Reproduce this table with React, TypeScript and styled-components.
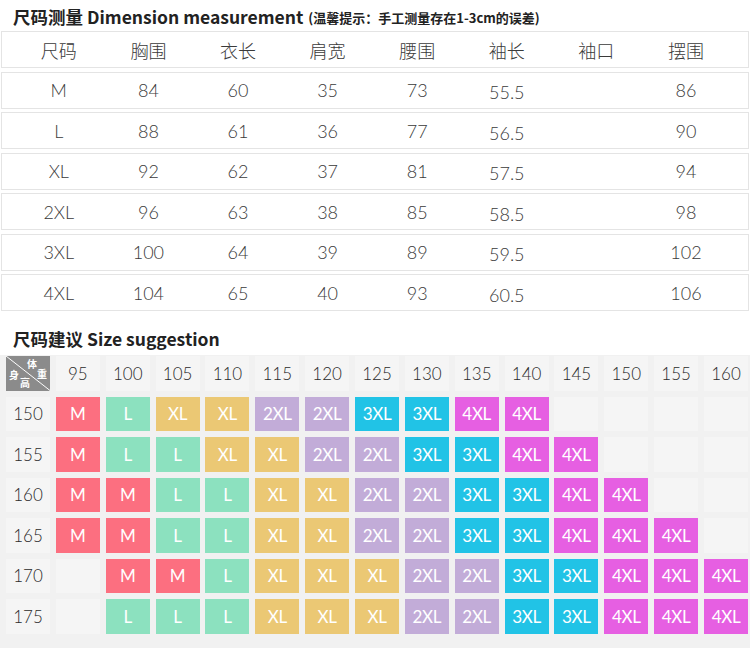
import React from "react";
import styled, { createGlobalStyle } from "styled-components";

const GlobalStyle = createGlobalStyle`
  html, body { margin: 0; padding: 0; background: #ffffff; }
  body { font-family: Lato, "Noto Sans CJK SC", sans-serif; color: #333; }
  * { box-sizing: border-box; }
`;

const Page = styled.div`
  width: 750px;
  background: #fff;
`;

const Title = styled.h2`
  margin: 0;
  height: 31px;
  padding: 1px 0 0 13px;
  display: flex;
  align-items: center;
  font-family: "Noto Sans CJK SC", sans-serif;
  font-weight: 700;
  font-size: 17.5px;
  color: #222;
  white-space: nowrap;
`;

const Note = styled.span`
  font-size: 13px;
  font-weight: 700;
  margin-left: 5px;
  margin-top: 2px;
  color: #222;
`;

const SizeTable = styled.div`
  display: flex;
  flex-direction: column;
  gap: 3.5px;
`;

const TableRow = styled.div`
  display: grid;
  grid-template-columns: repeat(8, 89.6px);
  padding-left: 12px;
  height: 37px;
  border: 1px solid #e4e4e4;
  margin: 0 1px;
  align-items: center;
  background: #fff;
`;

const TableCell = styled.div<{ $low?: boolean }>`
  text-align: center;
  font-size: 18px;
  font-weight: 300;
  color: #3a3a3a;
  font-family: Lato, "Noto Sans CJK SC", sans-serif;
  transform: translateY(${(p) => (p.$low ? "2px" : "0")});
`;

const SectionTitle = styled.h2`
  margin: 0;
  padding: 16px 0 4px 13px;
  line-height: 24px;
  font-family: "Noto Sans CJK SC", sans-serif;
  font-weight: 700;
  font-size: 17.5px;
  color: #222;
`;

const Chart = styled.div`
  background: #f1f1f1;
  padding: 1px 2px 14px 6px;
  display: grid;
  grid-template-columns: repeat(15, 1fr);
  grid-auto-rows: 34.5px;
  column-gap: 5.86px;
  row-gap: 6px;
`;

const Tile = styled.div`
  background: #f5f5f5;
  display: flex;
  align-items: center;
  justify-content: center;
  font-size: 17px;
  font-weight: 300;
  color: #2a2a2a;
`;

const COLORS: Record<string, string> = {
  M: "#fc6f80",
  L: "#8ce1bf",
  XL: "#ebc874",
  "2XL": "#c2acd8",
  "3XL": "#21c3e6",
  "4XL": "#e65fe2",
};

const SizeTile = styled.div<{ $bg: string }>`
  background: ${(p) => p.$bg};
  display: flex;
  align-items: center;
  justify-content: center;
  font-size: 17px;
  font-weight: 400;
  color: #fff;
  letter-spacing: -0.3px;
`;

const Corner = styled.div`
  position: relative;
  background: #8b8b8b;
  color: #fff;
  font-family: "Noto Sans CJK SC", sans-serif;
  font-size: 10px;
  font-weight: 700;
`;

const CornerLine = styled.svg`
  position: absolute;
  inset: 0;
  width: 100%;
  height: 100%;
`;

const CornerChar = styled.span<{ $x: number; $y: number }>`
  position: absolute;
  left: ${(p) => p.$x}px;
  top: ${(p) => p.$y}px;
  line-height: 12px;
`;

const headers = ["尺码", "胸围", "衣长", "肩宽", "腰围", "袖长", "袖口", "摆围"];
const rows = [
  ["M", "84", "60", "35", "73", "55.5", "", "86"],
  ["L", "88", "61", "36", "77", "56.5", "", "90"],
  ["XL", "92", "62", "37", "81", "57.5", "", "94"],
  ["2XL", "96", "63", "38", "85", "58.5", "", "98"],
  ["3XL", "100", "64", "39", "89", "59.5", "", "102"],
  ["4XL", "104", "65", "40", "93", "60.5", "", "106"],
];

const weights = ["95", "100", "105", "110", "115", "120", "125", "130", "135", "140", "145", "150", "155", "160"];
const chart: [string, string[]][] = [
  ["150", ["M", "L", "XL", "XL", "2XL", "2XL", "3XL", "3XL", "4XL", "4XL", "", "", "", ""]],
  ["155", ["M", "L", "L", "XL", "XL", "2XL", "2XL", "3XL", "3XL", "4XL", "4XL", "", "", ""]],
  ["160", ["M", "M", "L", "L", "XL", "XL", "2XL", "2XL", "3XL", "3XL", "4XL", "4XL", "", ""]],
  ["165", ["M", "M", "L", "L", "XL", "XL", "2XL", "2XL", "3XL", "3XL", "4XL", "4XL", "4XL", ""]],
  ["170", ["", "M", "M", "L", "XL", "XL", "XL", "2XL", "2XL", "3XL", "3XL", "4XL", "4XL", "4XL"]],
  ["175", ["", "L", "L", "L", "XL", "XL", "XL", "2XL", "2XL", "3XL", "3XL", "4XL", "4XL", "4XL"]],
];

export default function App() {
  return (
    <Page>
      <GlobalStyle />
      <Title>
        尺码测量 Dimension measurement
        <Note>(温馨提示：手工测量存在1-3cm的误差)</Note>
      </Title>
      <SizeTable>
        <TableRow>
          {headers.map((h) => (
            <TableCell key={h}>{h}</TableCell>
          ))}
        </TableRow>
        {rows.map((r) => (
          <TableRow key={r[0]}>
            {r.map((v, i) => (
              <TableCell key={i} $low={i === 5}>
                {v}
              </TableCell>
            ))}
          </TableRow>
        ))}
      </SizeTable>
      <SectionTitle>尺码建议 Size suggestion</SectionTitle>
      <Chart>
        <Corner>
          <CornerLine viewBox="0 0 44 35" preserveAspectRatio="none">
            <line x1="0" y1="0" x2="44" y2="35" stroke="#fff" strokeWidth="1" />
          </CornerLine>
          <CornerChar $x={21} $y={2}>体</CornerChar>
          <CornerChar $x={31} $y={12}>重</CornerChar>
          <CornerChar $x={3} $y={13}>身</CornerChar>
          <CornerChar $x={14} $y={21}>高</CornerChar>
        </Corner>
        {weights.map((w) => (
          <Tile key={w}>{w}</Tile>
        ))}
        {chart.map(([h, sizes]) => (
          <React.Fragment key={h}>
            <Tile>{h}</Tile>
            {sizes.map((s, i) =>
              s ? (
                <SizeTile key={i} $bg={COLORS[s]}>
                  {s}
                </SizeTile>
              ) : (
                <Tile key={i} />
              )
            )}
          </React.Fragment>
        ))}
      </Chart>
    </Page>
  );
}
